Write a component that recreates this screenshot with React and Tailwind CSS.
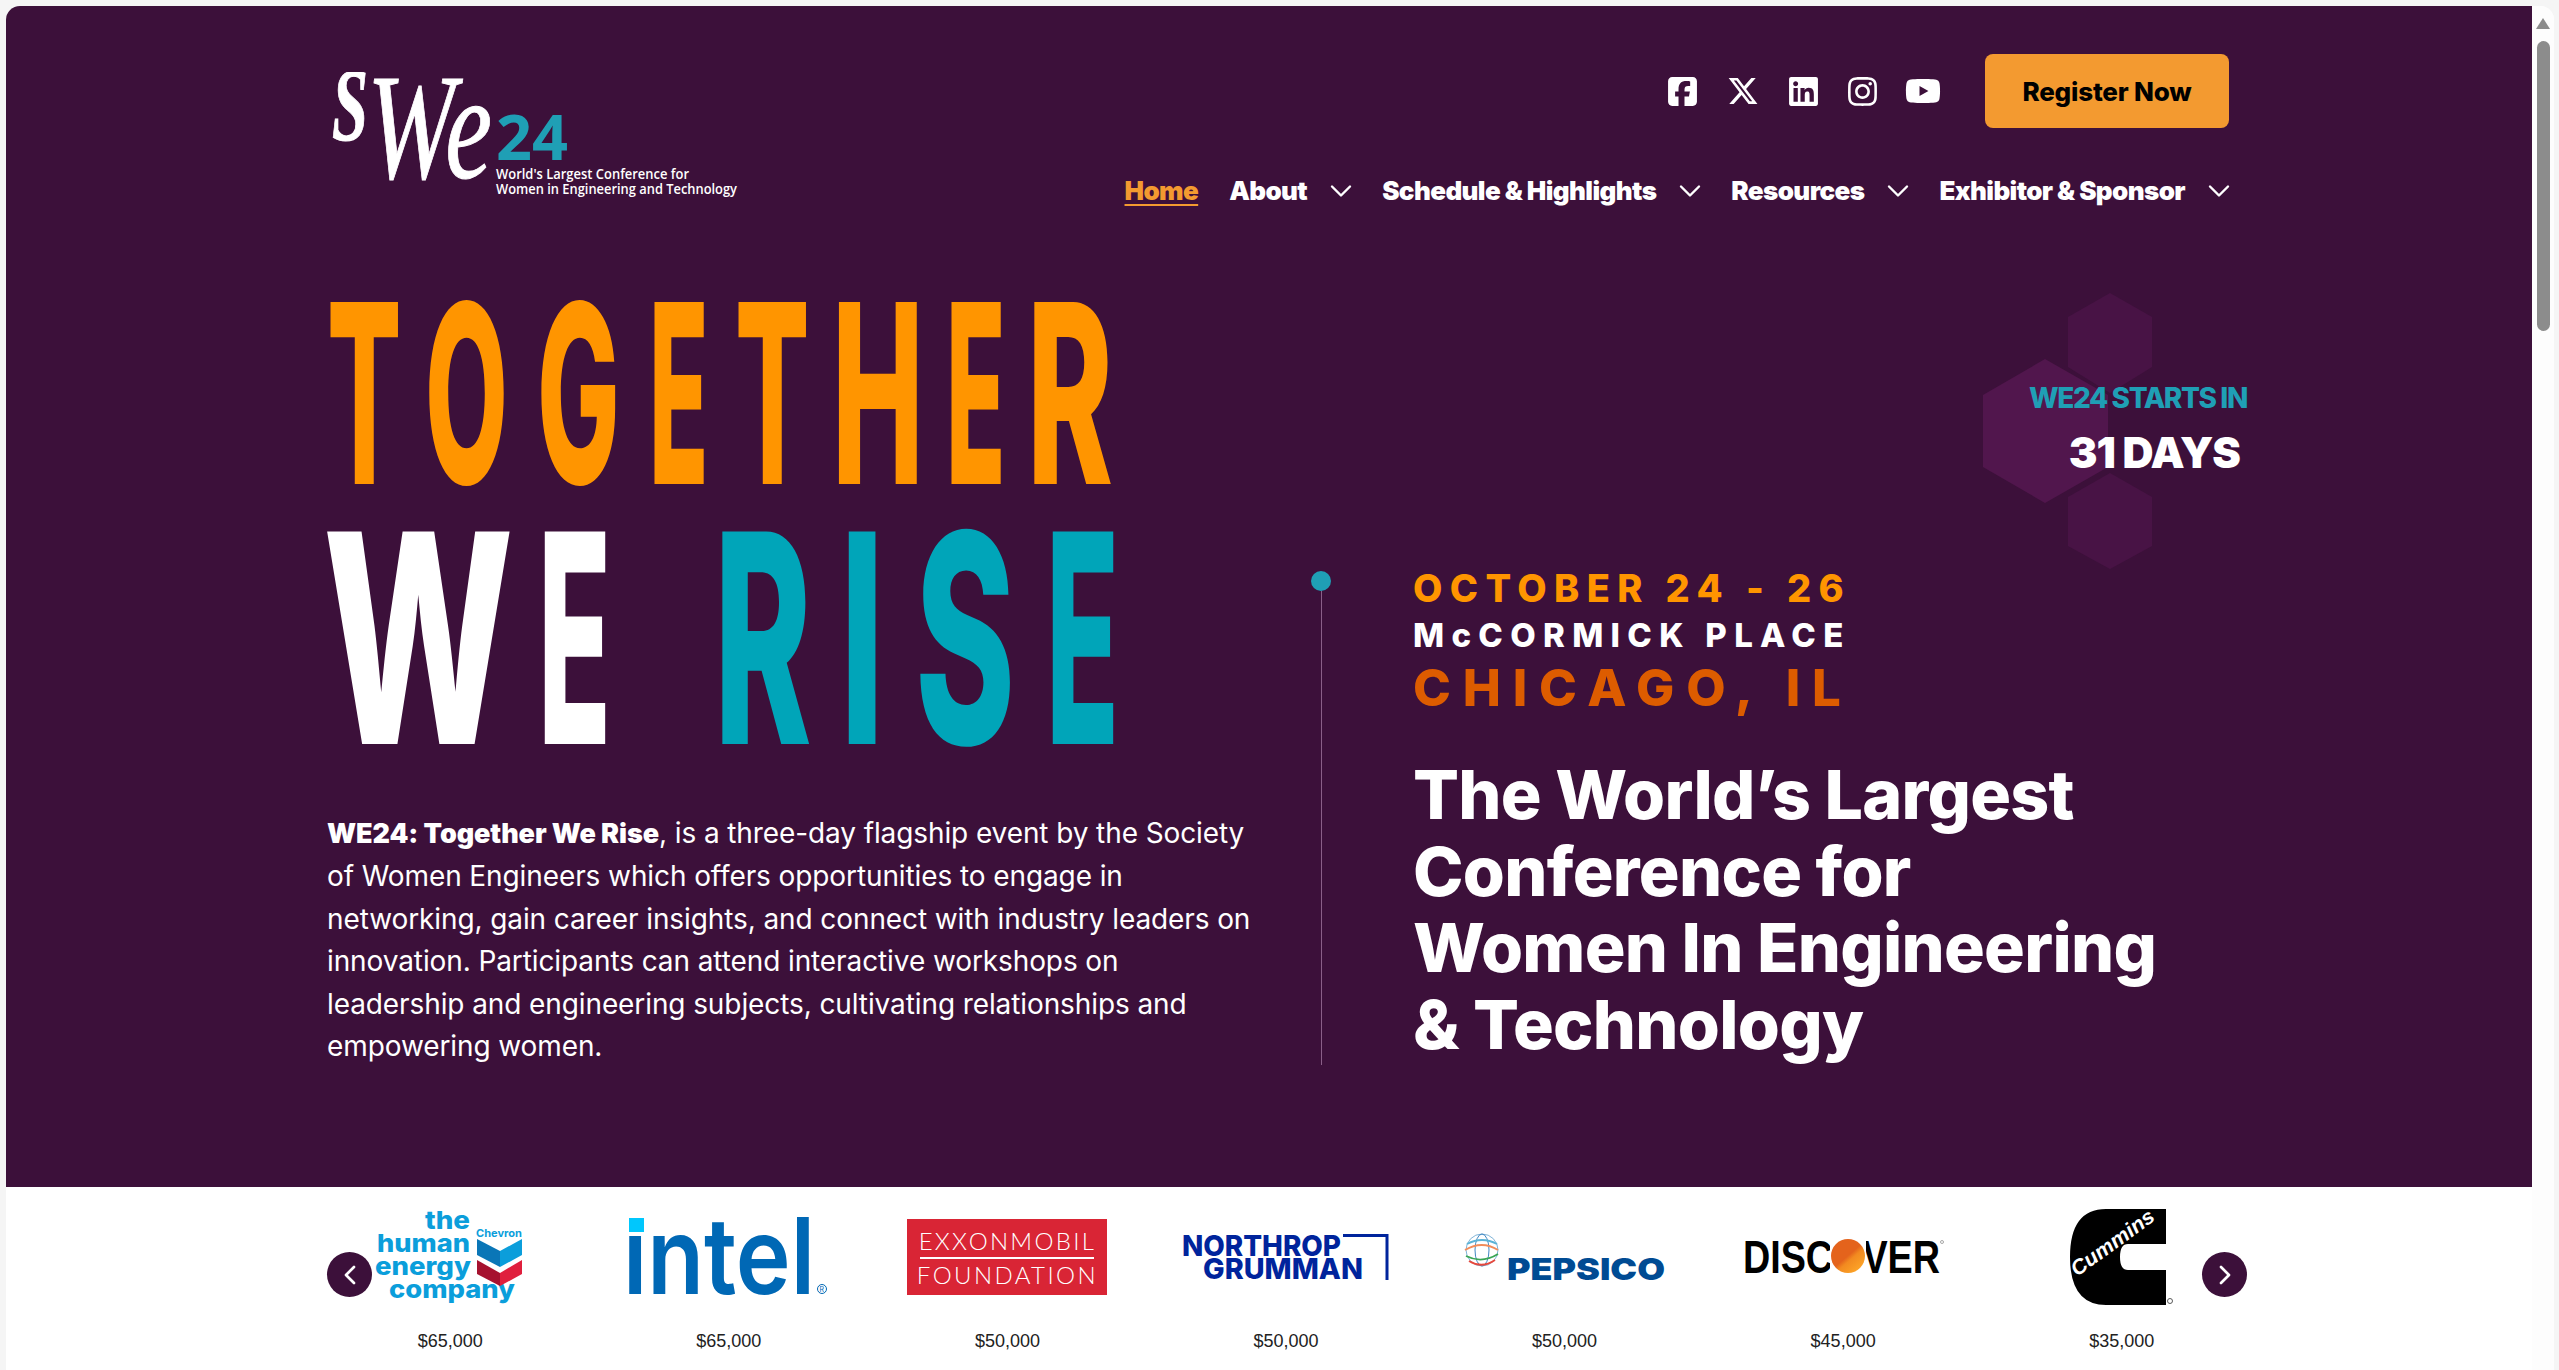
import React from 'react';
import { ChevronDown, ChevronLeft, ChevronRight } from 'lucide-react';
import { FaSquareFacebook, FaXTwitter, FaLinkedin, FaInstagram, FaYoutube } from 'react-icons/fa6';

const Letter = ({ box, scale, children }) => (
  <span className={`inline-block ${box}`}>
    <span className={`inline-block origin-left ${scale}`}>{children}</span>
  </span>
);

const NavItem = ({ label }) => (
  <div className="flex items-center">
    <a className="whitespace-nowrap">{label}</a>
    <ChevronDown className="ml-[16px] text-white" size={36} strokeWidth={1.600} />
  </div>
);

const ChevronLogo = () => (
  <svg width="150" height="98" viewBox="0 0 150 98">
    <g fill="#0b9edb" fontFamily="Inter, sans-serif" fontWeight="800" fontSize="25">
      <text x="50" y="21" textLength="45" lengthAdjust="spacingAndGlyphs">the</text>
      <text x="2" y="44" textLength="93" lengthAdjust="spacingAndGlyphs">human</text>
      <text x="0" y="67" textLength="96" lengthAdjust="spacingAndGlyphs">energy</text>
      <text x="14" y="90" textLength="126" lengthAdjust="spacingAndGlyphs">company</text>
    </g>
    <text x="101" y="29" fill="#0b9edb" fontFamily="Inter, sans-serif" fontWeight="700" fontSize="11" textLength="46" lengthAdjust="spacingAndGlyphs">Chevron</text>
    <path d="M102 31 L125 43 V59 L102 47 Z" fill="#0a76b7" />
    <path d="M147 31 L125 43 V59 L147 47 Z" fill="#0b9edb" />
    <path d="M102 52 L125 65 V78 L102 66 Z" fill="#a6122f" />
    <path d="M147 52 L125 65 V78 L147 66 Z" fill="#e01f3d" />
  </svg>
);

const IntelLogo = () => (
  <svg width="200" height="82" viewBox="0 0 200 82">
    <text x="-6" y="78" fill="#0068b5" fontFamily="Inter, sans-serif" fontWeight="600" fontSize="106" textLength="192" lengthAdjust="spacingAndGlyphs">intel</text>
    <rect x="0" y="0" width="16" height="18" fill="#fff" />
    <rect x="0" y="2" width="15" height="14" fill="#00c7fd" />
    <circle cx="193" cy="73" r="4.500" fill="none" stroke="#0068b5" strokeWidth="1" />
    <text x="190.500" y="76" fill="#0068b5" fontFamily="Inter, sans-serif" fontSize="7">R</text>
  </svg>
);

const ExxonLogo = () => (
  <div className="flex h-[76px] w-[200px] flex-col items-center bg-[#d92535] font-['Lato',sans-serif] font-light leading-none text-white">
    <span className="mt-[10px] text-[24px] tracking-[2.3px]">EXXONMOBIL</span>
    <span className="mt-[4px] h-[2px] w-[174px] bg-white"></span>
    <span className="mt-[4px] text-[24px] tracking-[2.4px]">FOUNDATION</span>
  </div>
);

const NorthropLogo = () => (
  <svg width="207" height="46" viewBox="0 0 207 46">
    <g fill="#00249c" fontFamily="Inter, sans-serif" fontWeight="800" fontSize="29">
      <text x="0" y="22" textLength="159" lengthAdjust="spacingAndGlyphs">NORTHROP</text>
      <text x="21" y="45" textLength="160" lengthAdjust="spacingAndGlyphs">GRUMMAN</text>
    </g>
    <path d="M161 1.500 H205 V46" fill="none" stroke="#00249c" strokeWidth="3" />
  </svg>
);

const PepsicoLogo = () => (
  <svg width="201" height="50" viewBox="0 0 201 50">
    <g fill="none" strokeWidth="1.800">
      <circle cx="18" cy="18" r="16" stroke="#7fb4d8" strokeWidth="1" />
      <ellipse cx="18" cy="18" rx="7" ry="16" stroke="#3f86c2" strokeWidth="1" />
      <path d="M3 12 Q18 4 33 12" stroke="#5cb3d6" />
      <path d="M1 18 Q18 8 34 18" stroke="#f28c5a" />
      <path d="M2 24 Q18 32 34 22" stroke="#3aa655" />
      <path d="M5 29 Q18 37 31 28" stroke="#e6483d" />
    </g>
    <text x="43" y="48" fill="#004b93" fontFamily="Inter, sans-serif" fontWeight="900" fontSize="30" textLength="158" lengthAdjust="spacingAndGlyphs">PEPSICO</text>
  </svg>
);

const DiscoverLogo = () => (
  <svg width="201" height="38" viewBox="0 0 201 38">
    <defs>
      <linearGradient id="discoverO" x1="0.200" y1="0.200" x2="0.800" y2="0.900">
        <stop offset="0.450" stopColor="#e4631c" />
        <stop offset="0.600" stopColor="#f28a20" />
        <stop offset="1" stopColor="#fca327" />
      </linearGradient>
    </defs>
    <text x="0" y="35" fill="#000" fontFamily="'Liberation Sans', sans-serif" fontWeight="700" fontSize="46" textLength="197" lengthAdjust="spacingAndGlyphs">DISCOVER</text>
    <rect x="87" y="0" width="36" height="38" fill="#fff" />
    <circle cx="105" cy="18" r="17" fill="url(#discoverO)" />
    <circle cx="199" cy="4" r="1.500" fill="none" stroke="#555" strokeWidth="0.500" />
  </svg>
);

const CumminsLogo = () => (
  <svg width="104" height="97" viewBox="0 0 104 97">
    <path d="M36 0 H96 V35 H58 Q50 35 50 48 Q50 61 58 61 H96 V96 H36 Q0 96 0 48 Q0 0 36 0 Z" fill="#000" />
    <text x="7" y="68" fill="#fff" transform="rotate(-36 7 68)" fontFamily="'Liberation Sans', sans-serif" fontWeight="700" fontStyle="italic" fontSize="21" textLength="98" lengthAdjust="spacingAndGlyphs">Cummins</text>
    <circle cx="100" cy="92" r="2.500" fill="none" stroke="#333" strokeWidth="0.800" />
  </svg>
);

const sponsors = [
  { logo: <ChevronLogo />, price: '$65,000' },
  { logo: <IntelLogo />, price: '$65,000' },
  { logo: <ExxonLogo />, price: '$50,000' },
  { logo: <NorthropLogo />, price: '$50,000' },
  { logo: <PepsicoLogo />, price: '$50,000' },
  { logo: <DiscoverLogo />, price: '$45,000' },
  { logo: <CumminsLogo />, price: '$35,000' },
];

export default function App() {
  return (
    <div className="flex h-[1370px] overflow-hidden bg-[#f5f5f5] pl-[6px] pr-[5px] pt-[6px]">
      <div className="flex flex-1 overflow-hidden rounded-t-[14px] bg-white">
        <main className="w-[2526px]">
          <section className="relative h-[1181px] bg-[#3c103a] font-['Inter',sans-serif]">
            {/* hexagons behind the countdown */}
            <svg className="absolute left-[1977px] top-[287px]" width="175" height="276" viewBox="0 0 175 276">
              <path d="M127 0 L169 24 V74 L127 100 L85 74 V24 Z" fill="#481345" />
              <path d="M127 180 L169 204 V253 L127 276 L85 253 V204 Z" fill="#481345" />
              <path d="M62 66 L125 102 V174 L62 210 L0 174 V102 Z" fill="#51164d" />
            </svg>

            <div className="relative ml-[305px] w-[1950px] px-4">
              <header className="flex justify-between pr-2 pt-[48px]">
                <svg width="420" height="130" viewBox="0 0 420 130" className="ml-[2px] mt-[18px]">
                  <text x="3" y="68" fill="#fff" stroke="#fff" strokeWidth="1" fontFamily="'Liberation Serif', serif" fontWeight="700" fontStyle="italic" fontSize="104" textLength="36" lengthAdjust="spacingAndGlyphs">S</text>
                  <text x="38" y="106" fill="#fff" stroke="#fff" strokeWidth="1" fontFamily="'Liberation Serif', serif" fontStyle="italic" fontSize="150" textLength="125" lengthAdjust="spacingAndGlyphs">We</text>
                  <text x="167" y="88" fill="#1f9fb5" fontFamily="'Open Sans', sans-serif" fontWeight="700" fontSize="63" textLength="72" lengthAdjust="spacingAndGlyphs">24</text>
                  <text x="167" y="107" fill="#fff" fontFamily="'Open Sans', sans-serif" fontWeight="600" fontSize="14" textLength="193" lengthAdjust="spacingAndGlyphs">World's Largest Conference for</text>
                  <text x="167" y="122" fill="#fff" fontFamily="'Open Sans', sans-serif" fontWeight="600" fontSize="14" textLength="241" lengthAdjust="spacingAndGlyphs">Women in Engineering and Technology</text>
                </svg>

                <div className="flex flex-col items-end">
                  <div className="mr-[8px] flex h-[74px] items-center text-white">
                    <FaSquareFacebook className="text-[33px]" />
                    <FaXTwitter className="ml-[28px] text-[32px]" />
                    <FaLinkedin className="ml-[28px] text-[33px]" />
                    <FaInstagram className="ml-[26px] text-[33px]" />
                    <FaYoutube className="ml-[26px] text-[36px]" />
                    <button className="ml-[44px] h-[74px] w-[244px] rounded-[8px] bg-[#f39a30] text-[26px] font-extrabold tracking-[-0.2px] text-black">Register Now</button>
                  </div>
                  <nav className="mt-[43px] flex items-center text-[26px] font-black tracking-[-0.6px] text-white">
                    <a className="mr-[31px] text-[#f39a30] underline underline-offset-4">Home</a>
                    <NavItem label="About" />
                    <span className="w-[23px]"></span>
                    <NavItem label="Schedule & Highlights" />
                    <span className="w-[23px]"></span>
                    <NavItem label="Resources" />
                    <span className="w-[23px]"></span>
                    <NavItem label="Exhibitor & Sponsor" />
                  </nav>
                </div>
              </header>

              <div className="mt-[92px] flex">
                <div className="w-[984px]">
                  <h1 className="font-extrabold">
                    <div className="flex h-[182px] whitespace-nowrap text-[250px] leading-[182px] text-[#ff9500]">
                      <Letter box="w-[98px]" scale="scale-x-[0.44]">T</Letter>
                      <Letter box="w-[112px]" scale="scale-x-[0.43]">O</Letter>
                      <Letter box="w-[112px]" scale="scale-x-[0.44]">G</Letter>
                      <Letter box="w-[86px]" scale="scale-x-[0.39]">E</Letter>
                      <Letter box="w-[97px]" scale="scale-x-[0.44]">T</Letter>
                      <Letter box="w-[114px]" scale="scale-x-[0.49]">H</Letter>
                      <Letter box="w-[81px]" scale="scale-x-[0.39]">E</Letter>
                      <Letter box="w-[78px]" scale="scale-x-[0.52]">R</Letter>
                    </div>
                    <div className="-ml-[4px] mt-[48px] flex h-[212px] whitespace-nowrap text-[292px] leading-[212px]">
                      <Letter box="w-[215px] text-white" scale="scale-x-[0.617]">W</Letter>
                      <Letter box="w-[176px] text-white" scale="scale-x-[0.41]">E</Letter>
                      <Letter box="w-[126px] text-[#00a5b9]" scale="scale-x-[0.505]">R</Letter>
                      <Letter box="w-[75px] text-[#00a5b9]" scale="scale-x-[0.53]">I</Letter>
                      <Letter box="w-[131px] text-[#00a5b9]" scale="scale-x-[0.52]">S</Letter>
                      <Letter box="w-[61px] text-[#00a5b9]" scale="scale-x-[0.41]">E</Letter>
                    </div>
                  </h1>
                  <p className="mt-[68px] whitespace-nowrap text-[28px] leading-[42.4px] tracking-[-0.1px] text-white">
                    <strong className="text-[27px] font-black">WE24: Together We Rise</strong>, is a three-day flagship event by the Society<br />
                    of Women Engineers which offers opportunities to engage in<br />
                    networking, gain career insights, and connect with industry leaders on<br />
                    innovation. Participants can attend interactive workshops on<br />
                    leadership and engineering subjects, cultivating relationships and<br />
                    empowering women.
                  </p>
                </div>

                <div className="relative flex-1 pt-[269px]">
                  <div className="absolute right-[-2px] top-[82px] text-right">
                    <p className="text-[28px] font-extrabold leading-none tracking-[-1.4px] text-[#1f9fb5]">WE24 STARTS IN</p>
                    <p className="mr-[7px] mt-[19px] text-[43px] font-black leading-none tracking-[-1px] text-white">31 DAYS</p>
                  </div>
                  <div className="flex">
                    <div className="flex w-[20px] flex-col items-center">
                      <span className="h-[20px] w-[20px] shrink-0 rounded-full bg-[#1f9fb5]"></span>
                      <span className="h-[474px] w-px bg-[#8a5f88]"></span>
                    </div>
                    <div className="-mt-[5px] ml-[82px]">
                      <div className="w-[431px] whitespace-nowrap font-extrabold">
                        <p className="text-[38px] leading-[44px] tracking-[7.4px] text-[#ff9500]">OCTOBER 24 - 26</p>
                        <p className="mt-[5px] text-[33px] leading-[40px] tracking-[7.3px] text-white">McCORMICK PLACE</p>
                        <p className="mt-[3px] text-[51px] leading-[60px] tracking-[11.8px] text-[#dd5c00]">CHICAGO, IL</p>
                      </div>
                      <h2 className="mt-[38px] whitespace-nowrap text-[68px] font-extrabold leading-[76.7px] tracking-[-0.7px] text-white">
                        The World’s Largest<br />
                        Conference for<br />
                        Women In Engineering<br />
                        &amp; Technology
                      </h2>
                    </div>
                  </div>
                </div>
              </div>
            </div>
          </section>

          <section className="relative ml-[305px] grid w-[1950px] grid-cols-7 pt-5">
            {sponsors.map((sponsor, i) => (
              <div key={i} className="flex flex-col items-center">
                <div className="flex h-[100px] items-center justify-center">{sponsor.logo}</div>
                <p className="mt-[23px] font-['Liberation_Sans',sans-serif] text-[18px] leading-[22px] text-[#222]">{sponsor.price}</p>
              </div>
            ))}
            <button className="absolute left-4 top-[65px] flex h-[45px] w-[45px] items-center justify-center rounded-full bg-[#3c103a] text-white">
              <ChevronLeft size={32} strokeWidth={2} />
            </button>
            <button className="absolute right-[14px] top-[65px] flex h-[45px] w-[45px] items-center justify-center rounded-full bg-[#3c103a] text-white">
              <ChevronRight size={32} strokeWidth={2} />
            </button>
          </section>
        </main>

        {/* browser scrollbar */}
        <aside className="relative w-[22px] bg-[#fdfdfd]">
          <span className="mx-auto mt-[12px] block h-0 w-0 border-x-[7px] border-b-[11px] border-x-transparent border-b-[#8c8c8c]"></span>
          <span className="mx-auto mt-[12px] block h-[290px] w-[13px] rounded-full bg-[#8c8c8c]"></span>
        </aside>
      </div>
    </div>
  );
}
